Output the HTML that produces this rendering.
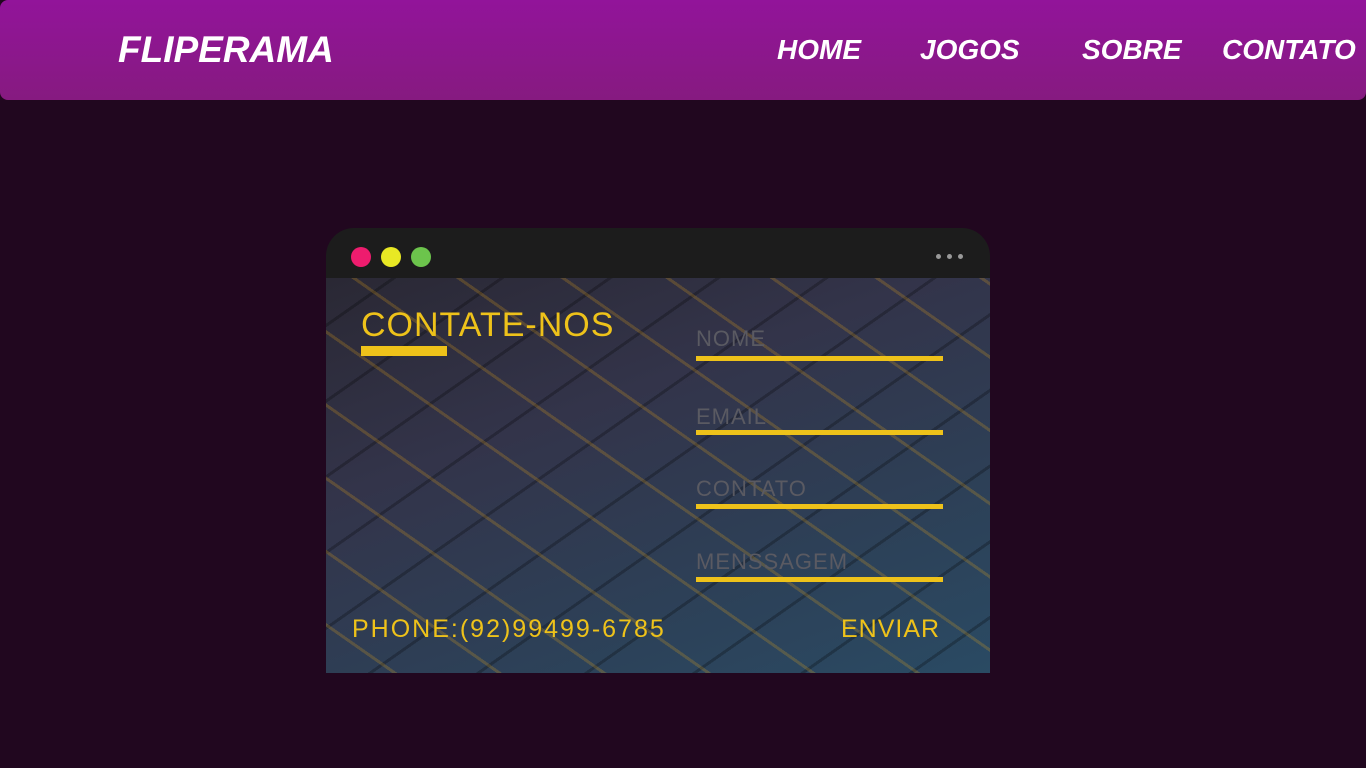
<!DOCTYPE html>
<html><head><meta charset="utf-8"><style>
*{margin:0;padding:0;box-sizing:border-box}
body{width:1366px;height:768px;background:#21071f;font-family:"Liberation Sans",sans-serif;position:relative;overflow:hidden}
.hdr{position:absolute;left:0;top:0;width:1366px;height:100px;background:linear-gradient(180deg,#92149a,#861a80);border-radius:8px 0 8px 8px}
.logo{position:absolute;left:118px;top:29px;color:#fff;font-size:37px;font-weight:bold;font-style:italic;letter-spacing:0}
.nav{position:absolute;top:34px;color:#fff;font-size:28px;font-weight:bold;font-style:italic}
.card{position:absolute;left:326px;top:228px;width:664px;height:445px;overflow:hidden;border-radius:28px 28px 0 0}
.bar{height:50px;background:#1c1c1c;position:relative}
.dot{position:absolute;top:19px;width:20px;height:20px;border-radius:50%}
.sm{position:absolute;top:26px;width:5px;height:5px;border-radius:50%;background:#999}
.img{position:absolute;top:50px;left:0;width:664px;height:395px;
background:
repeating-linear-gradient(35deg,transparent 0 38px,rgba(240,170,20,.22) 38px 41px,transparent 41px 60px),
repeating-linear-gradient(-35deg,transparent 0 44px,rgba(0,0,0,.25) 44px 47px,transparent 47px 62px),
linear-gradient(160deg,#2a2834 0%,#33344a 35%,#2d4057 70%,#2a4a63 100%)}
.t{position:absolute;font-family:"Liberation Sans",sans-serif;letter-spacing:1px}
.y{color:#eec21a}
.g{color:#5a5a62;font-size:22px}
.ln{position:absolute;left:370px;width:247px;height:5px;background:#eec21a}
</style></head><body>
<div class="hdr">
<div class="logo">FLIPERAMA</div>
<div class="nav" style="left:777px">HOME</div>
<div class="nav" style="left:920px">JOGOS</div>
<div class="nav" style="left:1082px">SOBRE</div>
<div class="nav" style="left:1222px">CONTATO</div>
</div>
<div class="card">
<div class="bar">
<div class="dot" style="left:25px;background:#ee1c6e"></div>
<div class="dot" style="left:55px;background:#e8e824"></div>
<div class="dot" style="left:85px;background:#6cc44c"></div>
<div class="sm" style="left:610px"></div><div class="sm" style="left:621px"></div><div class="sm" style="left:632px"></div>
</div>
<div class="img">
<div class="t y" style="left:35px;top:28px;font-size:34px">CONTATE-NOS</div>
<div style="position:absolute;left:35px;top:68px;width:86px;height:10px;background:#eec21a"></div>
<div class="t g" style="left:370px;top:48px">NOME</div>
<div class="ln" style="top:78px"></div>
<div class="t g" style="left:370px;top:126px">EMAIL</div>
<div class="ln" style="top:152px"></div>
<div class="t g" style="left:370px;top:198px">CONTATO</div>
<div class="ln" style="top:226px"></div>
<div class="t g" style="left:370px;top:271px">MENSSAGEM</div>
<div class="ln" style="top:299px"></div>
<div class="t y" style="left:26px;top:337px;font-size:25px;letter-spacing:2px">PHONE:(92)99499-6785</div>
<div class="t y" style="left:515px;top:337px;font-size:25px">ENVIAR</div>
</div>
</div>
</body></html>
